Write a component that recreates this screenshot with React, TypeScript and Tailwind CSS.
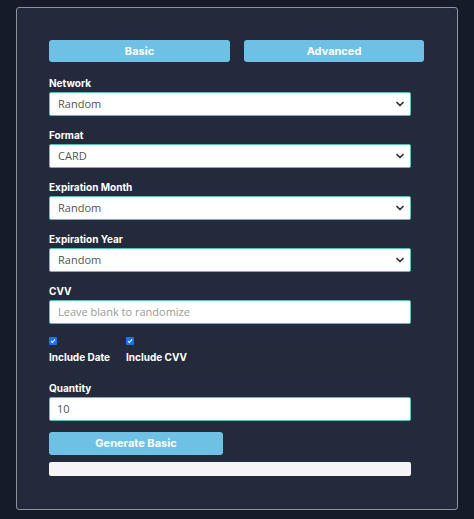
import { ChevronDown } from "lucide-react";

const labelFont = { fontFamily: "Inter, 'Noto Sans', sans-serif" };
const fieldFont = { fontFamily: "'Open Sans', 'Noto Sans', sans-serif" };

function Label({ children }: { children: React.ReactNode }) {
  return (
    <div className="mb-[2px] text-[10px] font-bold leading-[14px] text-white" style={labelFont}>
      {children}
    </div>
  );
}

function SelectField({ label, value }: { label: string; value: string }) {
  return (
    <div className="mb-[12px]">
      <Label>{label}</Label>
      <div className="flex h-[24px] w-[362px] items-center justify-between rounded-[2px] border border-[#55c4b8] bg-white pl-[8px] pr-[4px]">
        <span className="text-[11px] text-[#555]" style={fieldFont}>
          {value}
        </span>
        <ChevronDown size={12} strokeWidth={3.5} className="text-[#333]" />
      </div>
    </div>
  );
}

function Check({ label }: { label: string }) {
  return (
    <div className="flex flex-col">
      <span className="mb-[5px] flex h-[8px] w-[8px] items-center justify-center rounded-[1px] bg-[#1a73e8]">
        <svg viewBox="0 0 8 8" className="h-[6px] w-[6px]">
          <path d="M1.3 4.2 L3.2 6 L6.7 1.8" fill="none" stroke="white" strokeWidth="1.4" />
        </svg>
      </span>
      <span className="text-[10px] font-bold leading-[14px] text-white" style={labelFont}>
        {label}
      </span>
    </div>
  );
}

export default function App() {
  return (
    <div className="min-h-[519px] w-[474px] bg-[#151b29] pt-[7px] pl-[16px]">
      <div className="h-[503px] w-[442px] rounded-[3px] border border-[#8d929b] bg-[#232a3b] px-[32px] pt-[32px]">
        {/* mode tabs */}
        <div className="mb-[14px] flex gap-[14px]" style={labelFont}>
          <button className="h-[22px] w-[181px] rounded-[3px] bg-[#6ec1e4] text-[11px] font-bold text-white">
            Basic
          </button>
          <button className="h-[22px] w-[180px] rounded-[3px] bg-[#6ec1e4] text-[11px] font-bold text-white">
            Advanced
          </button>
        </div>

        <SelectField label="Network" value="Random" />
        <SelectField label="Format" value="CARD" />
        <SelectField label="Expiration Month" value="Random" />
        <SelectField label="Expiration Year" value="Random" />

        <div className="mb-[13px]">
          <Label>CVV</Label>
          <div className="flex h-[24px] w-[362px] items-center rounded-[2px] border border-[#55c4b8] bg-white pl-[8px]">
            <span className="text-[11px] text-[#999]" style={fieldFont}>
              Leave blank to randomize
            </span>
          </div>
        </div>

        <div className="mb-[17px] flex gap-[16px]">
          <Check label="Include Date" />
          <Check label="Include CVV" />
        </div>

        <div className="mb-[11px]">
          <Label>Quantity</Label>
          <div className="flex h-[24px] w-[362px] items-center rounded-[2px] border border-[#55c4b8] bg-white pl-[7px]">
            <span className="text-[11px] text-[#555]" style={fieldFont}>
              10
            </span>
          </div>
        </div>

        <button
          className="mb-[7px] block h-[23px] w-[174px] rounded-[3px] bg-[#6ec1e4] text-[11px] font-bold text-white"
          style={labelFont}
        >
          Generate Basic
        </button>

        <div className="h-[14px] w-[362px] rounded-[2px] bg-[#f5f5f5]" />
      </div>
    </div>
  );
}
